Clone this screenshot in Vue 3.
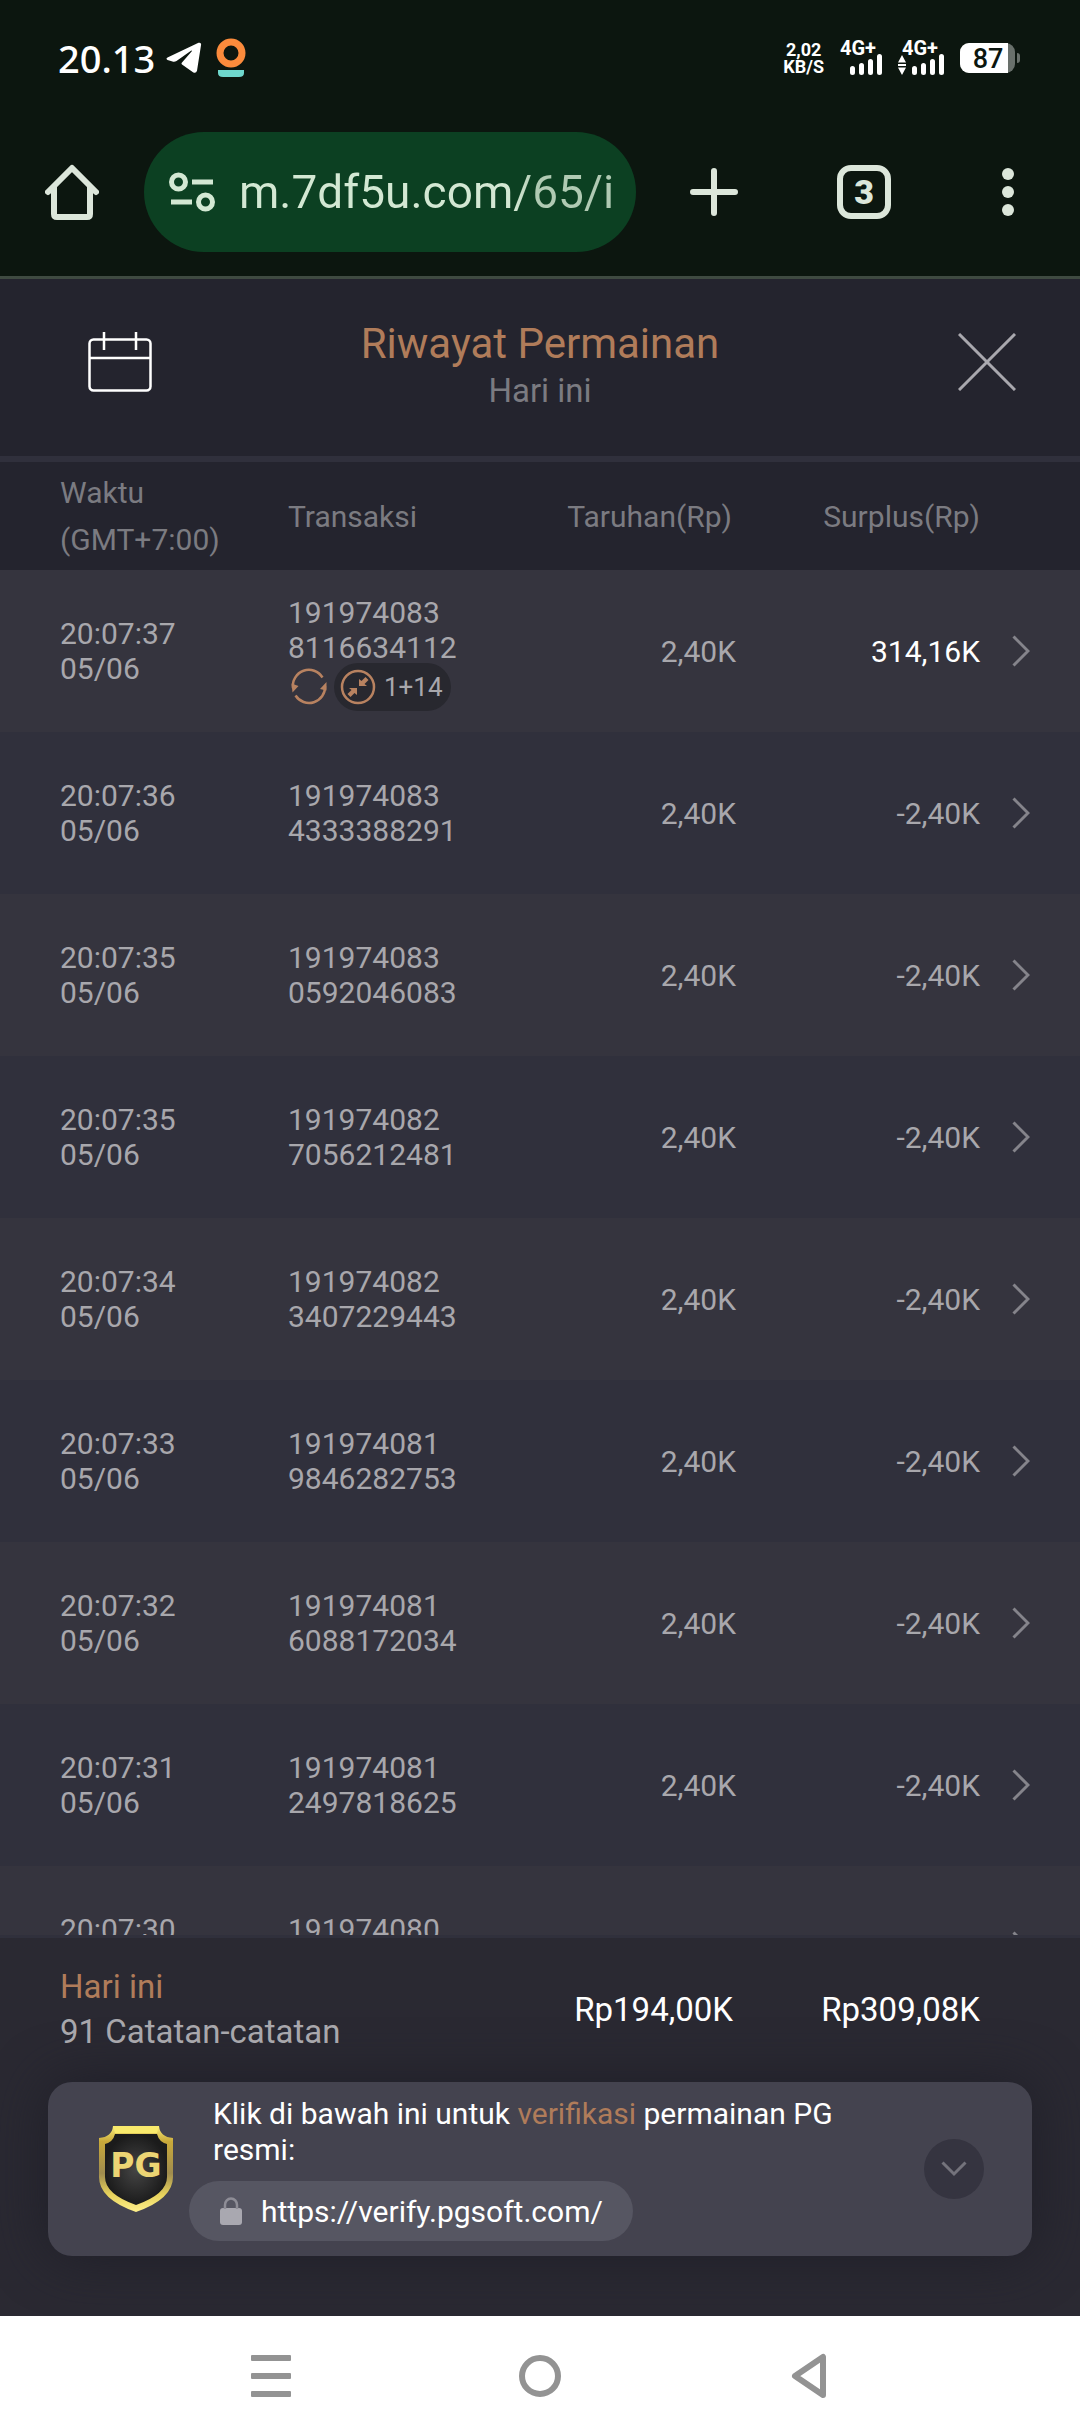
<script setup>
import { ref } from 'vue'

const address = ref('m.7df5u.com/65/i')

const rows = [
  { time: '20:07:37', date: '05/06', id: ['191974083', '8116634112'], bet: '2,40K', profit: '314,16K', win: true, spins: '1+14' },
  { time: '20:07:36', date: '05/06', id: ['191974083', '4333388291'], bet: '2,40K', profit: '-2,40K' },
  { time: '20:07:35', date: '05/06', id: ['191974083', '0592046083'], bet: '2,40K', profit: '-2,40K' },
  { time: '20:07:35', date: '05/06', id: ['191974082', '7056212481'], bet: '2,40K', profit: '-2,40K' },
  { time: '20:07:34', date: '05/06', id: ['191974082', '3407229443'], bet: '2,40K', profit: '-2,40K' },
  { time: '20:07:33', date: '05/06', id: ['191974081', '9846282753'], bet: '2,40K', profit: '-2,40K' },
  { time: '20:07:32', date: '05/06', id: ['191974081', '6088172034'], bet: '2,40K', profit: '-2,40K' },
  { time: '20:07:31', date: '05/06', id: ['191974081', '2497818625'], bet: '2,40K', profit: '-2,40K' },
  { time: '20:07:30', date: '', id: ['191974080'], bet: '', profit: '' }
]
</script>

<template>
  <div class="screen">
    <div class="chrome">
      <div class="status">
        <span class="clock">20.13</span>
        <svg class="telegram" width="36" height="32" viewBox="0 0 36 32" fill="#fff">
          <path d="M1.500 15.500 L32.500 .8 Q35.600 0 35 3.200 L31 28.800 Q30 31.800 27 30.300 L16 22.500 Q15 21.500 16 20.400 L26 9 Q26 8.200 25 8.700 L10.500 19 Q8.500 20.200 6.500 19.500 L1.500 18 Q-.6 16.800 1.500 15.500Z" />
        </svg>
        <svg width="30" height="40" viewBox="0 0 30 40">
          <circle cx="15" cy="15" r="11" fill="none" stroke="#fb8b3c" stroke-width="7" />
          <path d="M2 32h26v3q0 4-5 4H7q-5 0-5-4z" fill="#6fd8cd" />
        </svg>
        <div class="status-right">
          <div class="speed"><span>2,02</span><span>KB/S</span></div>
          <div class="signal">
            <span>4G+</span>
            <svg width="42" height="22" viewBox="0 0 42 22" stroke="#fff" stroke-width="5" stroke-linecap="round">
              <path d="M12.500 15.500v4M21.500 12.500v7M30.500 8.500v11M39.500 3.500v16" />
            </svg>
          </div>
          <div class="signal">
            <span>4G+</span>
            <svg width="46" height="22" viewBox="0 0 46 22">
              <path d="M0 9.500L4 2l4 7.500zM0 14.500L4 22l4-7.500zM0 11h8v2H0z" fill="#fff" />
              <path d="M16.500 15.500v4M25.500 12.500v7M34.500 8.500v11M43.500 3.500v16" stroke="#fff" stroke-width="5" stroke-linecap="round" />
            </svg>
          </div>
          <div class="battery"><span class="level">87</span></div>
        </div>
      </div>

      <div class="toolbar">
        <button class="tool" aria-label="Beranda">
          <svg width="54" height="56" viewBox="0 0 54 56" fill="none" stroke="#dce6da" stroke-width="6" stroke-linejoin="round" stroke-linecap="round">
            <path d="M3 28L27 4l24 24M9 23v27q0 3 3 3h30q3 0 3-3V23" />
          </svg>
        </button>
        <div class="omnibox">
          <svg width="46" height="40" viewBox="0 0 46 40" fill="none" stroke="#d3e8d3" stroke-width="5">
            <circle cx="9.500" cy="10" r="7" /><path d="M23 10h21M2 30h21" /><circle cx="36.500" cy="30" r="7" />
          </svg>
          <input v-model="address" class="address" type="text" aria-label="Alamat situs" />
        </div>
        <button class="tool tool-wide" aria-label="Tab baru">
          <svg width="48" height="48" viewBox="0 0 48 48" stroke="#dce6da" stroke-width="6" stroke-linecap="round">
            <path d="M24 3v42M3 24h42" />
          </svg>
        </button>
        <button class="tool" aria-label="Ganti tab"><span class="tabs">3</span></button>
        <button class="tool" aria-label="Menu">
          <svg width="12" height="48" viewBox="0 0 12 48" fill="#dce6da">
            <circle cx="6" cy="6" r="6" /><circle cx="6" cy="24" r="6" /><circle cx="6" cy="42" r="6" />
          </svg>
        </button>
      </div>
    </div>

    <header class="header">
      <button class="head-btn" aria-label="Pilih tanggal">
        <svg width="64" height="60" viewBox="0 0 64 60" fill="none" stroke="#fff" stroke-width="2.500">
          <rect x="1.500" y="7.500" width="61" height="51" rx="4" /><path d="M1.500 26h61M16 0v18M48 0v18" />
        </svg>
      </button>
      <div class="titles">
        <h1>Riwayat Permainan</h1>
        <p>Hari ini</p>
      </div>
      <button class="head-btn close" aria-label="Tutup">
        <svg width="58" height="58" viewBox="0 0 58 58" stroke="#a9a8ae" stroke-width="3">
          <path d="M1 1l56 56M57 1L1 57" />
        </svg>
      </button>
    </header>

    <main class="list">
      <table>
        <colgroup>
          <col class="c-time" /><col /><col class="c-bet" /><col class="c-profit" /><col class="c-go" />
        </colgroup>
        <thead>
          <tr>
            <th class="time" scope="col">Waktu<br />(GMT+7:00)</th>
            <th scope="col">Transaksi</th>
            <th class="num bet-head" scope="col">Taruhan(Rp)</th>
            <th class="num" scope="col">Surplus(Rp)</th>
            <td></td>
          </tr>
        </thead>
        <tbody>
          <tr v-for="row in rows" :key="row.id.join('')">
            <td class="time">{{ row.time }}<br />{{ row.date }}&nbsp;</td>
            <td>
              <div v-for="part in row.id" :key="part">{{ part }}</div>
              <div v-if="row.id.length < 2">&nbsp;</div>
              <div v-if="row.spins" class="badges">
                <svg width="42" height="40" viewBox="0 0 42 40">
                  <g fill="none" stroke="#b88260" stroke-width="2.500">
                    <path d="M5 21A16 16 0 0 1 34.500 10.500M37 19A16 16 0 0 1 7.500 28.500" />
                  </g>
                  <path d="M3.500 16.500l7 2.500-6 6.500zM38.500 23.500V15l-6.500 7z" fill="#b88260" />
                </svg>
                <span class="free">
                  <svg width="36" height="36" viewBox="0 0 36 36">
                    <circle cx="18" cy="18" r="16" fill="none" stroke="#b88260" stroke-width="2.500" />
                    <path d="M19 17v-7l2.500 2 4-4 3 3-4 4 2.500 2zM17 19v7l-2.500-2-4 4-3-3 4-4-2.500-2z" fill="#b88260" />
                  </svg>
                  {{ row.spins }}
                </span>
              </div>
            </td>
            <td class="num">{{ row.bet }}</td>
            <td class="num" :class="{ win: row.win }">{{ row.profit }}</td>
            <td class="go">
              <button :aria-label="'Detail ' + row.time">
                <svg width="18" height="32" viewBox="0 0 18 32" fill="none" stroke="#85848b" stroke-width="3">
                  <path d="M1.500 1.500L16 16 1.500 30.500" />
                </svg>
              </button>
            </td>
          </tr>
        </tbody>
      </table>
    </main>

    <footer class="footer">
      <div class="totals">
        <div class="period">
          <div class="accent">Hari ini</div>
          <div>91 Catatan-catatan</div>
        </div>
        <div class="sum">Rp194,00K</div>
        <div class="sum">Rp309,08K</div>
      </div>
      <section class="card">
        <svg class="shield" width="76" height="88" viewBox="0 0 76 88">
          <defs>
            <linearGradient id="gold" x1="0" y1="0" x2="0" y2="1">
              <stop offset="0" stop-color="#fbee79" /><stop offset=".18" stop-color="#c9a93a" />
              <stop offset=".55" stop-color="#a08c4e" /><stop offset=".8" stop-color="#e8d35c" /><stop offset="1" stop-color="#fff08c" />
            </linearGradient>
            <radialGradient id="core"><stop offset="0" stop-color="#454545" /><stop offset="1" stop-color="#1b1b1b" /></radialGradient>
          </defs>
          <path d="M15 1h46q1 11 14 12v39q0 22-37 35Q1 74 1 52V13Q14 12 15 1z" fill="url(#gold)" />
          <path d="M17 9h42q2 8 10 10v33q0 17-31 28Q7 69 7 52V19q8-2 10-10z" fill="url(#core)" />
          <path d="M15 1h46l-2 7H17z" fill="#f9ea6c" />
          <text x="38" y="52" text-anchor="middle" class="pg">PG</text>
        </svg>
        <div class="card-body">
          <p>Klik di bawah ini untuk <span class="accent">verifikasi</span> permainan PG resmi:</p>
          <a class="verify" href="https://verify.pgsoft.com/">
            <svg width="24" height="28" viewBox="0 0 24 28">
              <rect x="1" y="11" width="22" height="17" rx="3" fill="#a9a8b0" />
              <path d="M6 12V8a6 6.500 0 0 1 12 0v4" fill="none" stroke="#8e8d96" stroke-width="2.500" />
            </svg>
            https://verify.pgsoft.com/
          </a>
        </div>
        <button class="fold" aria-label="Ciutkan">
          <svg width="26" height="16" viewBox="0 0 26 16" fill="none" stroke="#74737c" stroke-width="3">
            <path d="M1.500 1.500L13 13 24.500 1.500" />
          </svg>
        </button>
      </section>
    </footer>

    <nav class="nav">
      <button aria-label="Aplikasi terbaru">
        <svg width="40" height="42" viewBox="0 0 40 42" fill="#939393">
          <rect width="40" height="6" rx="1" /><rect y="18" width="40" height="6" rx="1" /><rect y="36" width="40" height="6" rx="1" />
        </svg>
      </button>
      <button aria-label="Layar utama">
        <svg width="42" height="42" viewBox="0 0 42 42"><circle cx="21" cy="21" r="18" fill="none" stroke="#939393" stroke-width="6" /></svg>
      </button>
      <button aria-label="Kembali">
        <svg width="36" height="46" viewBox="0 0 36 46" fill="none" stroke="#939393" stroke-width="6" stroke-linejoin="round">
          <path d="M32 4v38L4 23z" />
        </svg>
      </button>
    </nav>
  </div>
</template>

<style>
body {
  background: #24242e;
}
</style>

<style scoped>
.screen {
  display: flex;
  flex-direction: column;
  height: 100vh;
  font-family: Roboto, "Liberation Sans", sans-serif;
  font-size: 30px;
  color: #a8a7ac;
  background: #24242e;
}

svg {
  display: block;
  flex: none;
}

button {
  display: flex;
  align-items: center;
  justify-content: center;
  padding: 0;
  border: 0;
  background: none;
  font: inherit;
  color: inherit;
}

h1,
p {
  margin: 0;
  font-weight: 400;
}

.accent {
  color: #b07c5a;
}

/* browser chrome */
.chrome {
  flex: none;
  background: #0c160f;
  border-bottom: 3px solid #3f4a41;
}

.status {
  display: flex;
  align-items: center;
  height: 116px;
  padding: 0 65px 0 58px;
  margin-bottom: 16px;
  color: #fff;
}

.clock {
  font-family: "Noto Sans", sans-serif;
  font-size: 38px;
  font-weight: 500;
}

.telegram {
  margin: 0 14px 0 11px;
}

.status-right {
  display: flex;
  align-items: center;
  gap: 16px;
  margin-left: auto;
  font-weight: 700;
}

.speed {
  display: flex;
  flex-direction: column;
  align-items: center;
  font-size: 18px;
  line-height: 17px;
}

.signal {
  display: flex;
  flex-direction: column;
  align-items: flex-start;
  font-size: 20px;
  line-height: 14px;
}

.signal svg {
  align-self: flex-end;
  margin-top: -2px;
}

.signal + .signal span {
  padding-left: 4px;
}

.battery {
  position: relative;
  display: flex;
  width: 55px;
  height: 30px;
  border-radius: 9px;
  background: #69706b;
}

.battery::after {
  content: "";
  position: absolute;
  right: -5px;
  top: 10px;
  width: 3px;
  height: 10px;
  border-radius: 0 3px 3px 0;
  background: #69706b;
}

.level {
  width: 48px;
  padding-left: 8px;
  box-sizing: border-box;
  border-radius: 9px 0 0 9px;
  background: #fff;
  color: #0c160f;
  font-size: 27px;
  font-weight: 500;
  line-height: 32px;
  text-align: center;
}

.toolbar {
  display: flex;
  align-items: center;
  padding-bottom: 24px;
}

.tool {
  flex: none;
  width: 144px;
  height: 120px;
}

.tool-wide {
  width: 156px;
}

.omnibox {
  display: flex;
  flex: 1;
  align-items: center;
  gap: 24px;
  min-width: 0;
  height: 120px;
  padding: 0 22px 0 25px;
  box-sizing: border-box;
  border-radius: 60px;
  background: #0c4022;
}

.address {
  flex: 1;
  min-width: 0;
  padding: 0;
  border: 0;
  outline: 0;
  background: linear-gradient(90deg, #d3e8d3 276px, #b0cab3 296px);
  background-clip: text;
  color: transparent;
  font-family: inherit;
  font-size: 46px;
  line-height: 60px;
}

.tabs {
  width: 54px;
  height: 54px;
  box-sizing: border-box;
  border: 6px solid #dce6da;
  border-radius: 14px;
  color: #dce6da;
  font-size: 34px;
  font-weight: 900;
  line-height: 43px;
}

/* page header */
.header {
  display: flex;
  flex: none;
  align-items: center;
  height: 177px;
  border-bottom: 6px solid #30303c;
}

.head-btn {
  width: 240px;
  height: 120px;
  padding-bottom: 12px;
}

.close {
  padding-left: 54px;
}

.titles {
  flex: 1;
  text-align: center;
}

h1 {
  color: #b07c5a;
  font-size: 42px;
  line-height: 46px;
}

.titles p {
  color: #7b7b81;
  font-size: 33px;
  line-height: 48px;
}

/* history table */
.list {
  flex: 1;
  min-height: 0;
  overflow: hidden;
  border-bottom: 3px solid #30303c;
}

table {
  width: 100%;
  table-layout: fixed;
  border-collapse: collapse;
  line-height: 35px;
}

th,
td {
  padding: 0;
  font-weight: 400;
  text-align: left;
  vertical-align: middle;
}

.c-time {
  width: 288px;
}

.c-bet {
  width: 248px;
}

.c-profit {
  width: 244px;
}

.c-go {
  width: 100px;
}

thead tr {
  height: 108px;
  color: #7b7b81;
  line-height: 47px;
}

tbody tr {
  height: 162px;
  background: #30303c;
}

tbody tr:nth-child(odd) {
  background: #35343e;
}

.time {
  padding-left: 60px;
}

.num {
  text-align: right;
}

.bet-head {
  padding-right: 4px;
}

.win {
  color: #fff;
}

.go button {
  width: 82px;
  height: 80px;
}

.badges {
  display: flex;
  align-items: center;
  gap: 4px;
  margin: -2px 0 -4px;
}

.free {
  display: flex;
  align-items: center;
  gap: 8px;
  height: 48px;
  padding: 0 8px 0 6px;
  border-radius: 24px;
  background: #28282f;
  font-size: 26px;
}

/* summary */
.footer {
  flex: none;
  padding: 26px 48px 60px;
  background: #2a2932;
}

.totals {
  display: flex;
  align-items: center;
  padding: 0 52px 0 12px;
  margin-bottom: 28px;
  font-size: 33px;
  line-height: 45px;
}

.period {
  flex: 1;
}

.sum {
  width: 247px;
  color: #fff;
  text-align: right;
}

.card {
  display: flex;
  align-items: center;
  padding: 14px 48px 15px 50px;
  border-radius: 24px;
  background: #44434f;
  box-shadow: 0 0 54px #1f1f28;
  color: #fff;
}

.pg {
  fill: #ecd574;
  font-family: "DejaVu Sans", sans-serif;
  font-size: 33px;
  font-weight: 700;
}

.card-body {
  flex: 1;
  padding: 0 40px 0 15px;
}

.card-body p {
  padding-left: 24px;
  margin-bottom: 13px;
  line-height: 36px;
}

.verify {
  display: inline-flex;
  align-items: center;
  gap: 18px;
  height: 60px;
  padding: 0 30px;
  box-sizing: border-box;
  border-radius: 30px;
  background: #565662;
  color: #fff;
  text-decoration: none;
  vertical-align: top;
}

.fold {
  flex: none;
  width: 60px;
  height: 60px;
  border-radius: 50%;
  background: #353440;
}

/* system navigation */
.nav {
  display: flex;
  flex: none;
  justify-content: center;
  height: 120px;
  background: #fff;
}

.nav button {
  width: 269px;
}
</style>
